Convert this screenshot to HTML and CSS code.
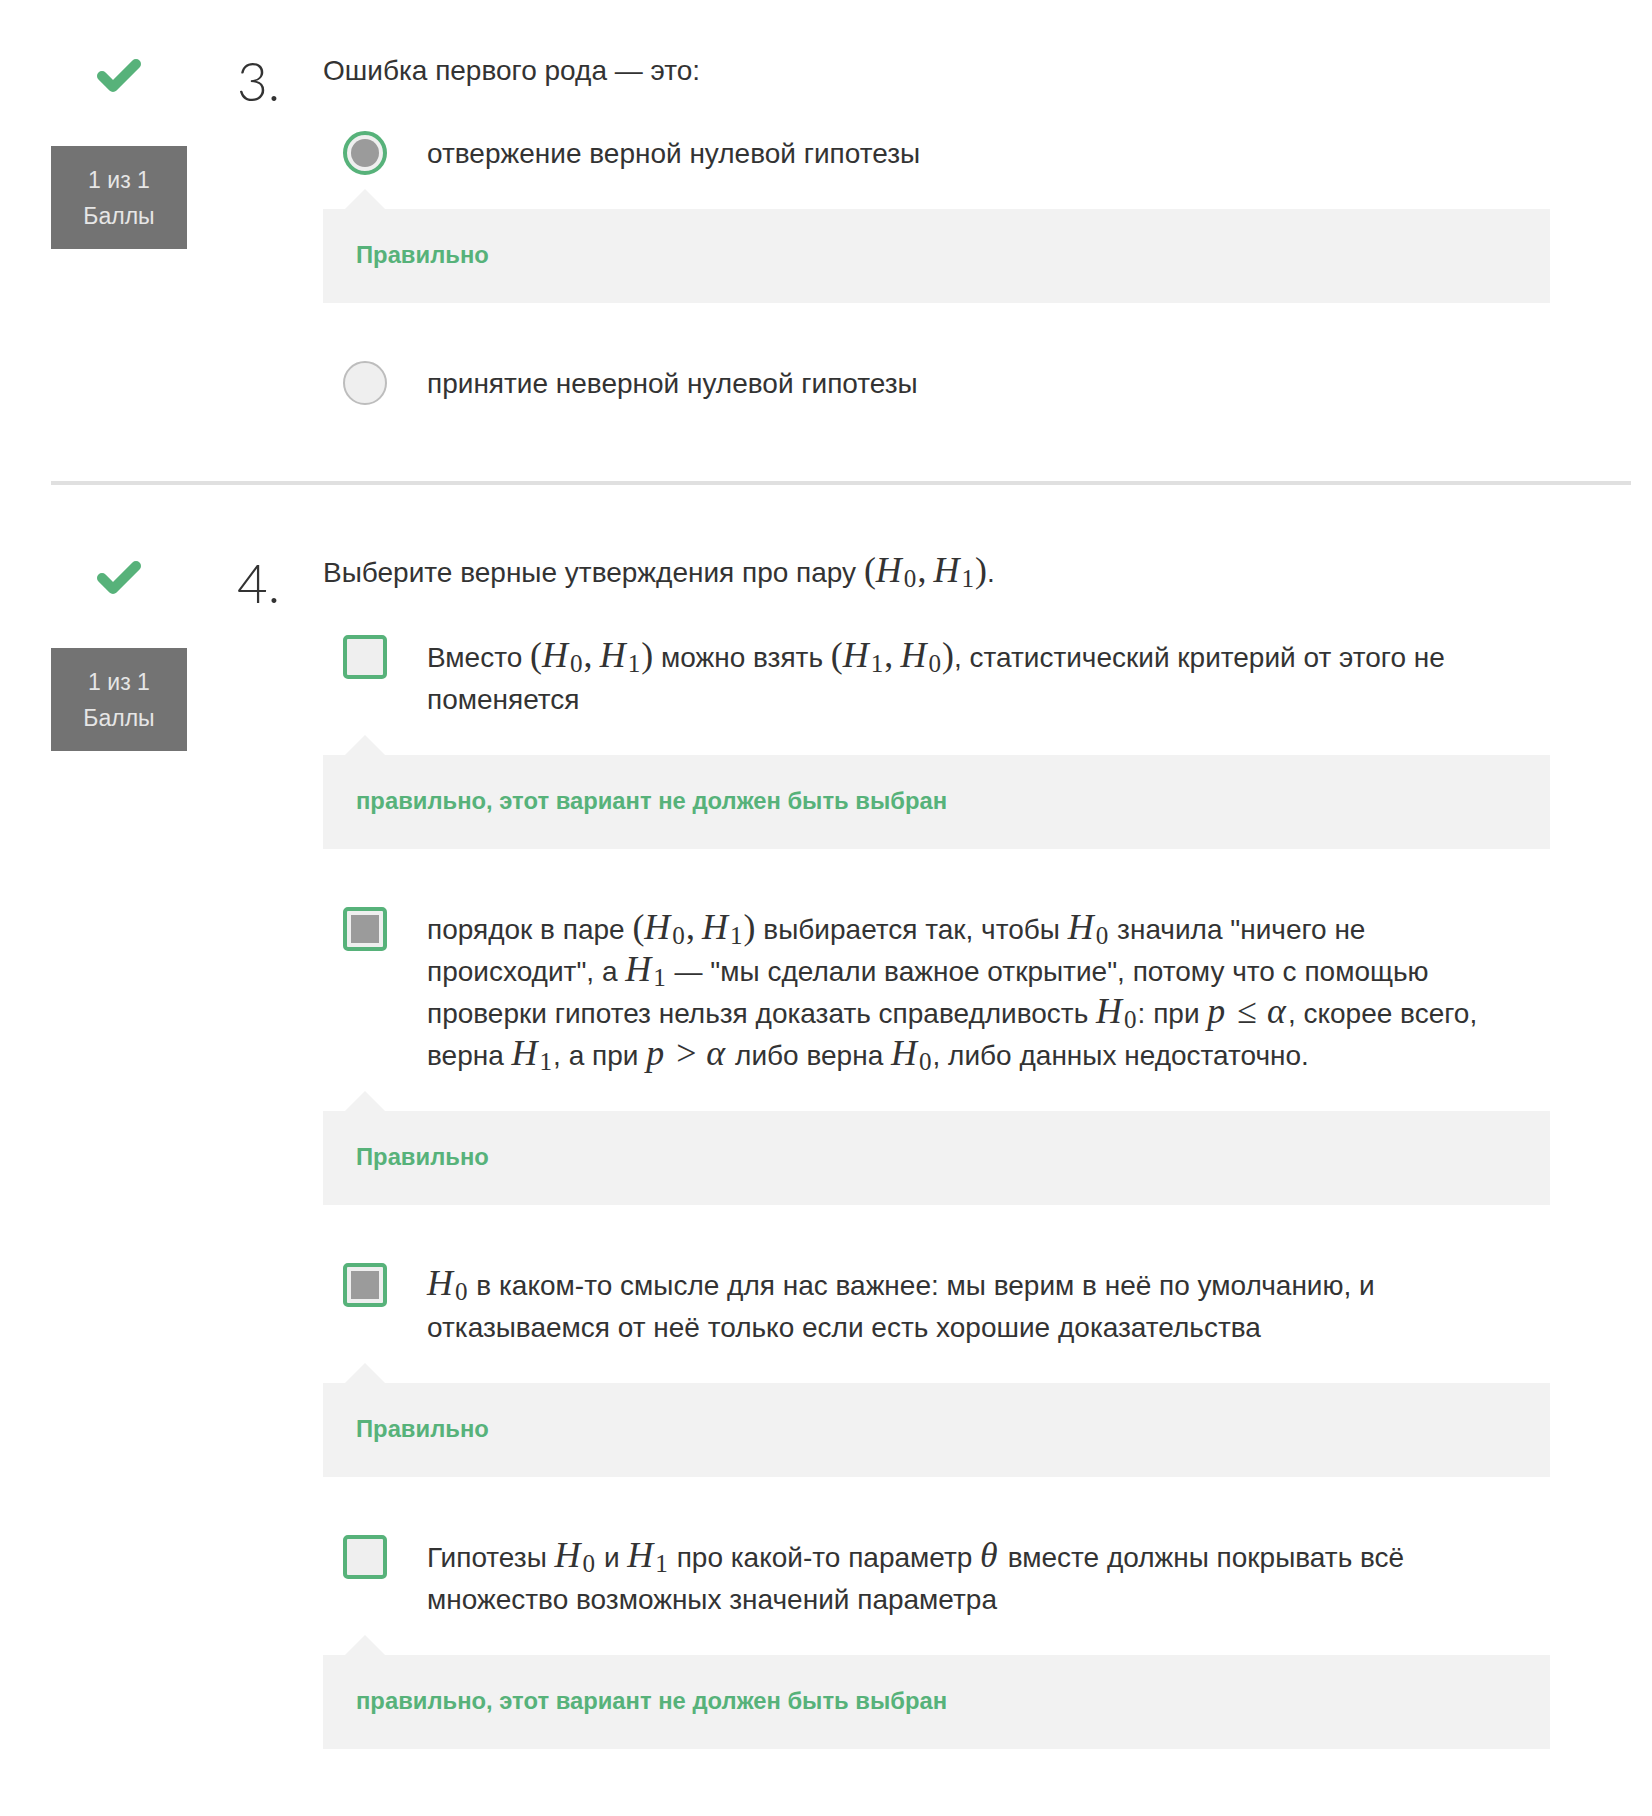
FILE: index.html
```html
<!DOCTYPE html>
<html lang="ru">
<head>
<meta charset="utf-8">
<title>Тест</title>
<link rel="stylesheet" href="styles.css">
</head>
<body>
<div class="quiz">

  <section class="question">
    <div class="status">
      <svg class="check" viewBox="0 0 46 36" width="46" height="36" aria-hidden="true">
        <polyline points="6,18 17,29 40,6" fill="none" stroke="#57b27a" stroke-width="10" stroke-linecap="round" stroke-linejoin="round"/>
      </svg>
      <div class="score">1 из 1<br>Баллы</div>
    </div>
    <div class="qnum">3.</div>
    <div class="qbody">
      <div class="qtext">Ошибка первого рода — это:</div>
      <div class="options">
        <div class="option">
          <div class="opt-row">
            <span class="radio checked"></span>
            <div class="opt-text">отвержение верной нулевой гипотезы</div>
          </div>
          <div class="feedback">Правильно</div>
        </div>
        <div class="option">
          <div class="opt-row">
            <span class="radio"></span>
            <div class="opt-text">принятие неверной нулевой гипотезы</div>
          </div>
        </div>
      </div>
    </div>
  </section>

  <hr class="divider">

  <section class="question">
    <div class="status">
      <svg class="check" viewBox="0 0 46 36" width="46" height="36" aria-hidden="true">
        <polyline points="6,18 17,29 40,6" fill="none" stroke="#57b27a" stroke-width="10" stroke-linecap="round" stroke-linejoin="round"/>
      </svg>
      <div class="score">1 из 1<br>Баллы</div>
    </div>
    <div class="qnum">4.</div>
    <div class="qbody">
      <div class="qtext with-math">Выберите верные утверждения про пару <span class="m">(<i>H</i><sub>0</sub>,<span class="sp"></span><i>H</i><sub>1</sub>)</span>.</div>
      <div class="options">
        <div class="option">
          <div class="opt-row">
            <span class="box"></span>
            <div class="opt-text">Вместо <span class="m">(<i>H</i><sub>0</sub>,<span class="sp"></span><i>H</i><sub>1</sub>)</span> можно взять <span class="m">(<i>H</i><sub>1</sub>,<span class="sp"></span><i>H</i><sub>0</sub>)</span>, статистический критерий от этого не поменяется</div>
          </div>
          <div class="feedback">правильно, этот вариант не должен быть выбран</div>
        </div>
        <div class="option">
          <div class="opt-row">
            <span class="box checked"></span>
            <div class="opt-text">порядок в паре <span class="m">(<i>H</i><sub>0</sub>,<span class="sp"></span><i>H</i><sub>1</sub>)</span> выбирается так, чтобы <span class="m"><i>H</i><sub>0</sub></span> значила "ничего не происходит", а <span class="m"><i>H</i><sub>1</sub></span> — "мы сделали важное открытие", потому что с помощью проверки гипотез нельзя доказать справедливость <span class="m"><i>H</i><sub>0</sub></span>: при <span class="m"><i>p</i><span class="rel">≤</span><i>α</i></span>, скорее всего, верна <span class="m"><i>H</i><sub>1</sub></span>, а при <span class="m"><i>p</i><span class="rel">&gt;</span><i>α</i></span> либо верна <span class="m"><i>H</i><sub>0</sub></span>, либо данных недостаточно.</div>
          </div>
          <div class="feedback">Правильно</div>
        </div>
        <div class="option">
          <div class="opt-row">
            <span class="box checked"></span>
            <div class="opt-text"><span class="m"><i>H</i><sub>0</sub></span> в каком-то смысле для нас важнее: мы верим в неё по умолчанию, и отказываемся от неё только если есть хорошие доказательства</div>
          </div>
          <div class="feedback">Правильно</div>
        </div>
        <div class="option">
          <div class="opt-row">
            <span class="box"></span>
            <div class="opt-text">Гипотезы <span class="m"><i>H</i><sub>0</sub></span> и <span class="m"><i>H</i><sub>1</sub></span> про какой-то параметр <span class="m"><i>θ</i></span> вместе должны покрывать всё множество возможных значений параметра</div>
          </div>
          <div class="feedback">правильно, этот вариант не должен быть выбран</div>
        </div>
      </div>
    </div>
  </section>

</div>
</body>
</html>
```

FILE: styles.css
```css
* {
  box-sizing: border-box;
}

html, body {
  margin: 0;
  background: #ffffff;
}

body {
  font-family: "Liberation Sans", Arial, sans-serif;
  color: #333333;
}

.quiz {
  width: 1580px;
  margin-left: 51px;
  padding-top: 50px;
}

.question {
  display: flex;
  align-items: flex-start;
  padding-bottom: 76px;
}

.divider + .question {
  padding-top: 67px;
}

.divider {
  display: block;
  height: 4px;
  margin: 0;
  border: 0;
  background: #e0e0e0;
}

.status {
  width: 136px;
  flex: none;
  display: flex;
  flex-direction: column;
  align-items: center;
}

.check {
  display: block;
  margin-top: 8px;
}

.score {
  margin-top: 52px;
  width: 136px;
  height: 103px;
  padding-top: 16px;
  background: #737373;
  color: #e6e6e6;
  font-size: 23px;
  line-height: 36px;
  text-align: center;
}

.qnum {
  width: 86px;
  flex: none;
  margin-left: 50px;
  font-family: Lato, "Open Sans", sans-serif;
  font-weight: 300;
  font-size: 53px;
  line-height: 62px;
  color: #333333;
}

.qbody {
  width: 1227px;
  flex: none;
}

.qtext {
  font-size: 28px;
  line-height: 42px;
}

.qtext.with-math {
  padding-bottom: 2px;
}

.options {
  margin-top: 39px;
}

.option + .option {
  margin-top: 58px;
}

.opt-row {
  display: flex;
  align-items: flex-start;
  gap: 40px;
  padding-left: 20px;
}

.opt-text {
  width: 1065px;
  padding-top: 2px;
  font-size: 28px;
  line-height: 42px;
}

/* radio buttons */
.radio {
  flex: none;
  position: relative;
  width: 44px;
  height: 44px;
  border-radius: 50%;
  border: 2px solid #bdbdbd;
  background: #efefef;
}

.radio.checked {
  border: 4px solid #57b27a;
}

.radio.checked::after {
  content: "";
  position: absolute;
  left: 4px;
  top: 4px;
  width: 28px;
  height: 28px;
  border-radius: 50%;
  background: #9b9b9b;
}

/* checkboxes */
.box {
  flex: none;
  position: relative;
  width: 44px;
  height: 44px;
  border-radius: 5px;
  border: 4px solid #57b27a;
  background: #efefef;
}

.box.checked::after {
  content: "";
  position: absolute;
  left: 4px;
  top: 4px;
  width: 28px;
  height: 28px;
  background: #9b9b9b;
}

/* feedback */
.feedback {
  position: relative;
  margin-top: 34px;
  height: 94px;
  padding: 31px 33px 0;
  background: #f2f2f2;
  color: #57b27a;
  font-weight: bold;
  font-size: 23.8px;
  line-height: 30px;
}

.feedback::before {
  content: "";
  position: absolute;
  left: 22px;
  top: -20px;
  border-left: 20px solid transparent;
  border-right: 20px solid transparent;
  border-bottom: 20px solid #f2f2f2;
}

/* math */
.m {
  font-family: "Liberation Serif", "Times New Roman", serif;
  font-size: 1.28em;
  line-height: 0;
  white-space: nowrap;
}

.m i {
  font-style: italic;
  margin-right: 0.06em;
}

.m sub {
  font-size: 0.7em;
  vertical-align: -0.2em;
  line-height: 0;
  margin-right: 0.04em;
}

.sp {
  display: inline-block;
  width: 0.2em;
}

.rel {
  padding: 0 0.2778em;
}
```
